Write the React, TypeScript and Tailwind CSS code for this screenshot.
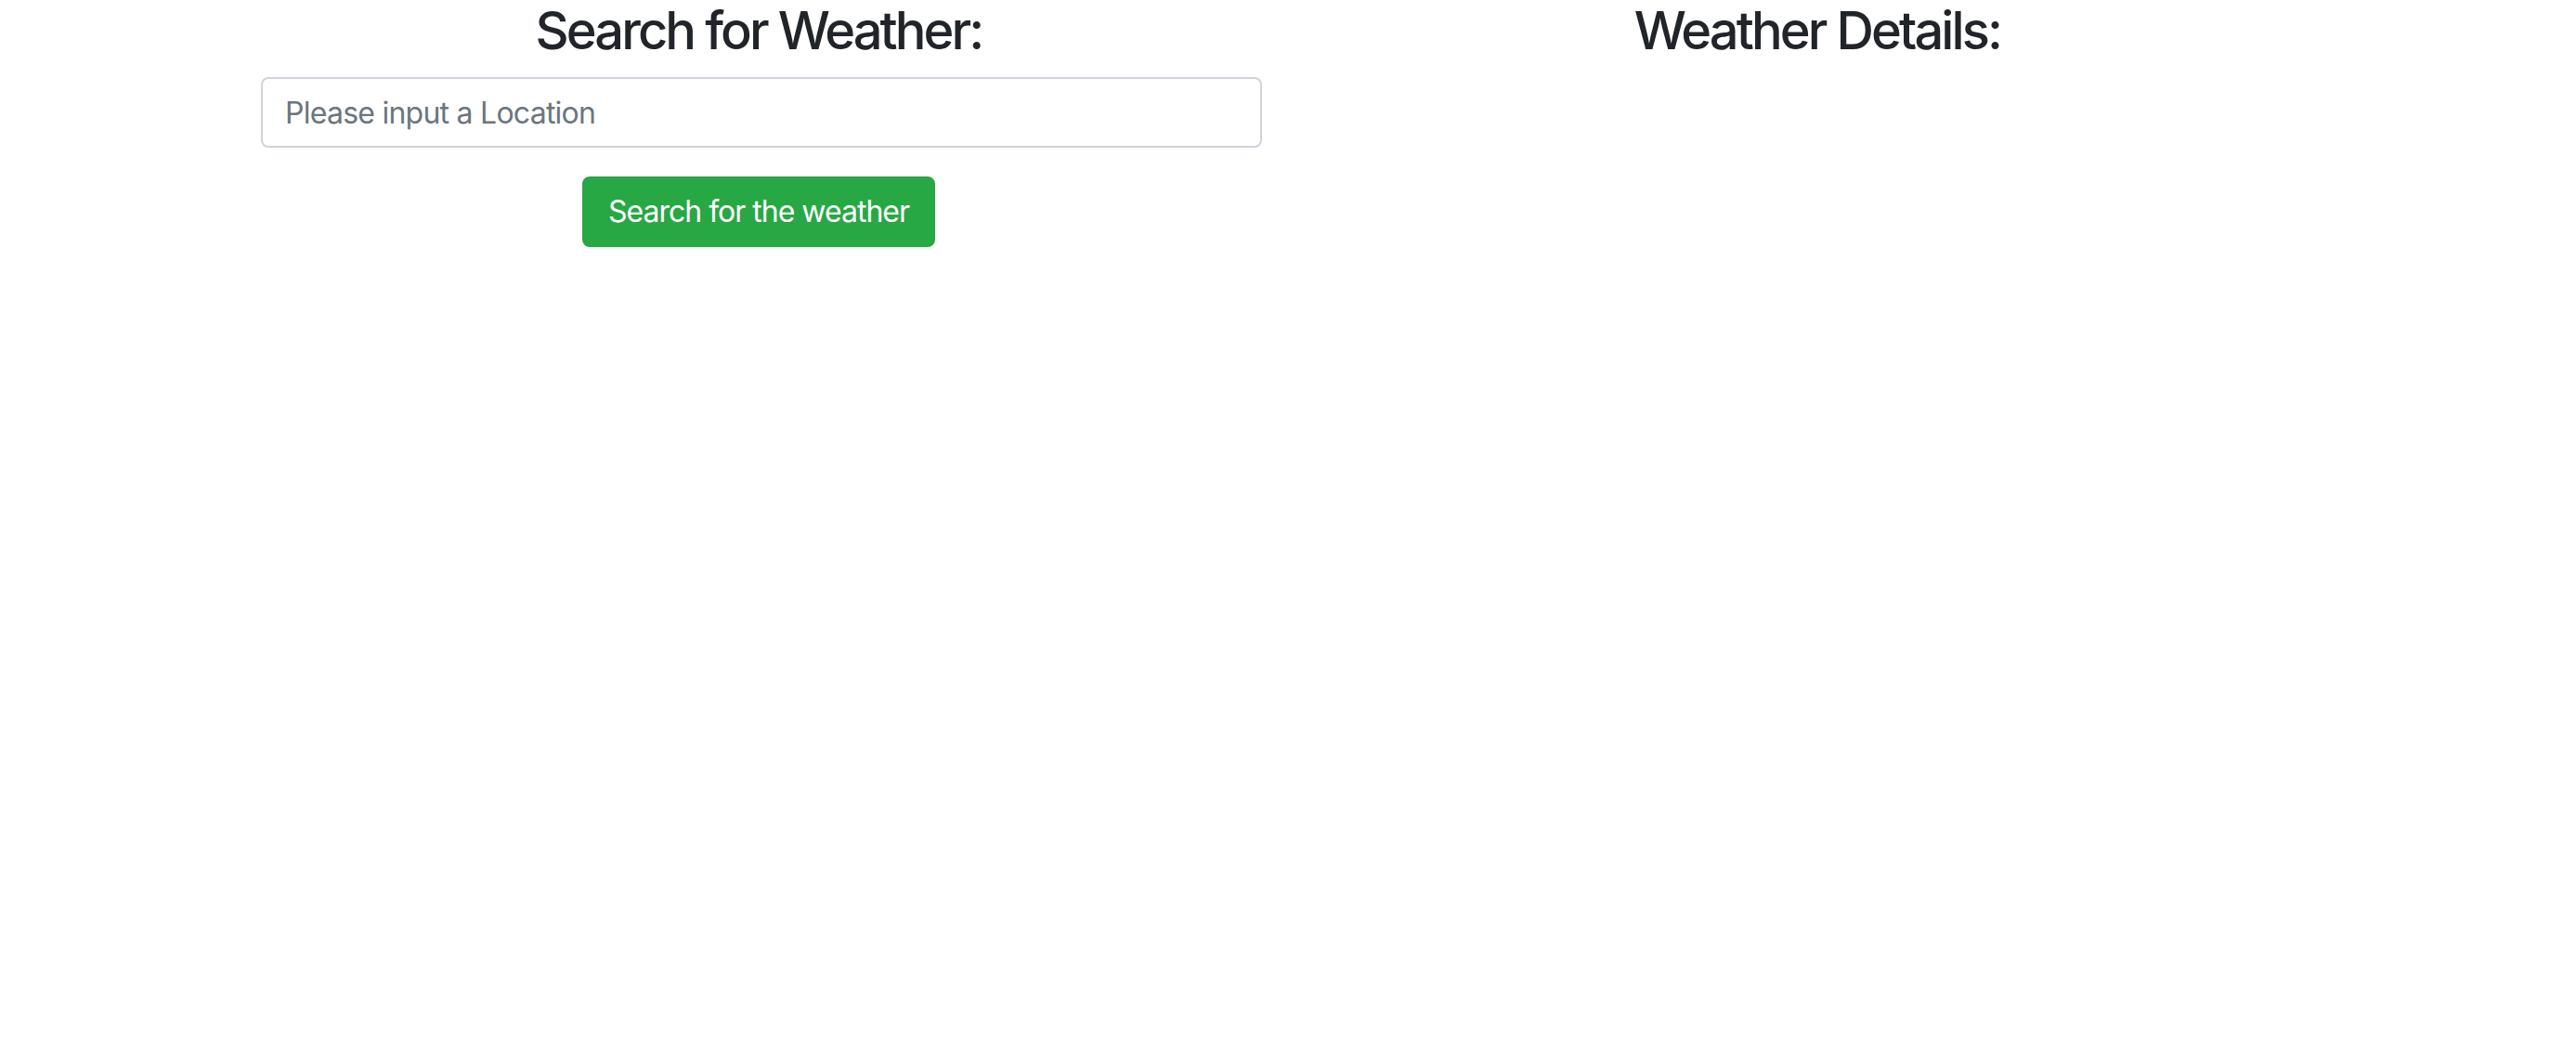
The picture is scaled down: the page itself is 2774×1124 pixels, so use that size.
export default function App() {
  return (
    <div className="min-h-[1124px] w-full bg-white font-['Inter','Liberation_Sans',sans-serif] text-[#212529]">
      <div className="mx-auto grid w-[2280px] grid-cols-2">
        {/* Search column */}
        <div className="px-[30px] text-center">
          <h3 className="mb-[16px] text-[56px] font-medium leading-[1.2] tracking-[-2.9px]">Search for Weather:</h3>
          <input
            type="text"
            placeholder="Please input a Location"
            className="ml-[4px] block h-[76px] w-[1078px] rounded-[8px] border-2 border-[#ced4da] px-[24px] text-[32px] tracking-[-0.75px] text-[#495057] placeholder:text-[#6c757d] outline-none"
          />
          <button className="mt-[31px] h-[76px] rounded-[8px] border-2 border-[#28a745] bg-[#28a745] px-[26px] text-[32px] leading-[1.5] tracking-[-1px] text-white">
            Search for the weather
          </button>
        </div>

        {/* Details column */}
        <div className="px-[30px] text-center">
          <h3 className="mb-[16px] text-[56px] font-medium leading-[1.2] tracking-[-2.9px]">Weather Details:</h3>
        </div>
      </div>
    </div>
  )
}
